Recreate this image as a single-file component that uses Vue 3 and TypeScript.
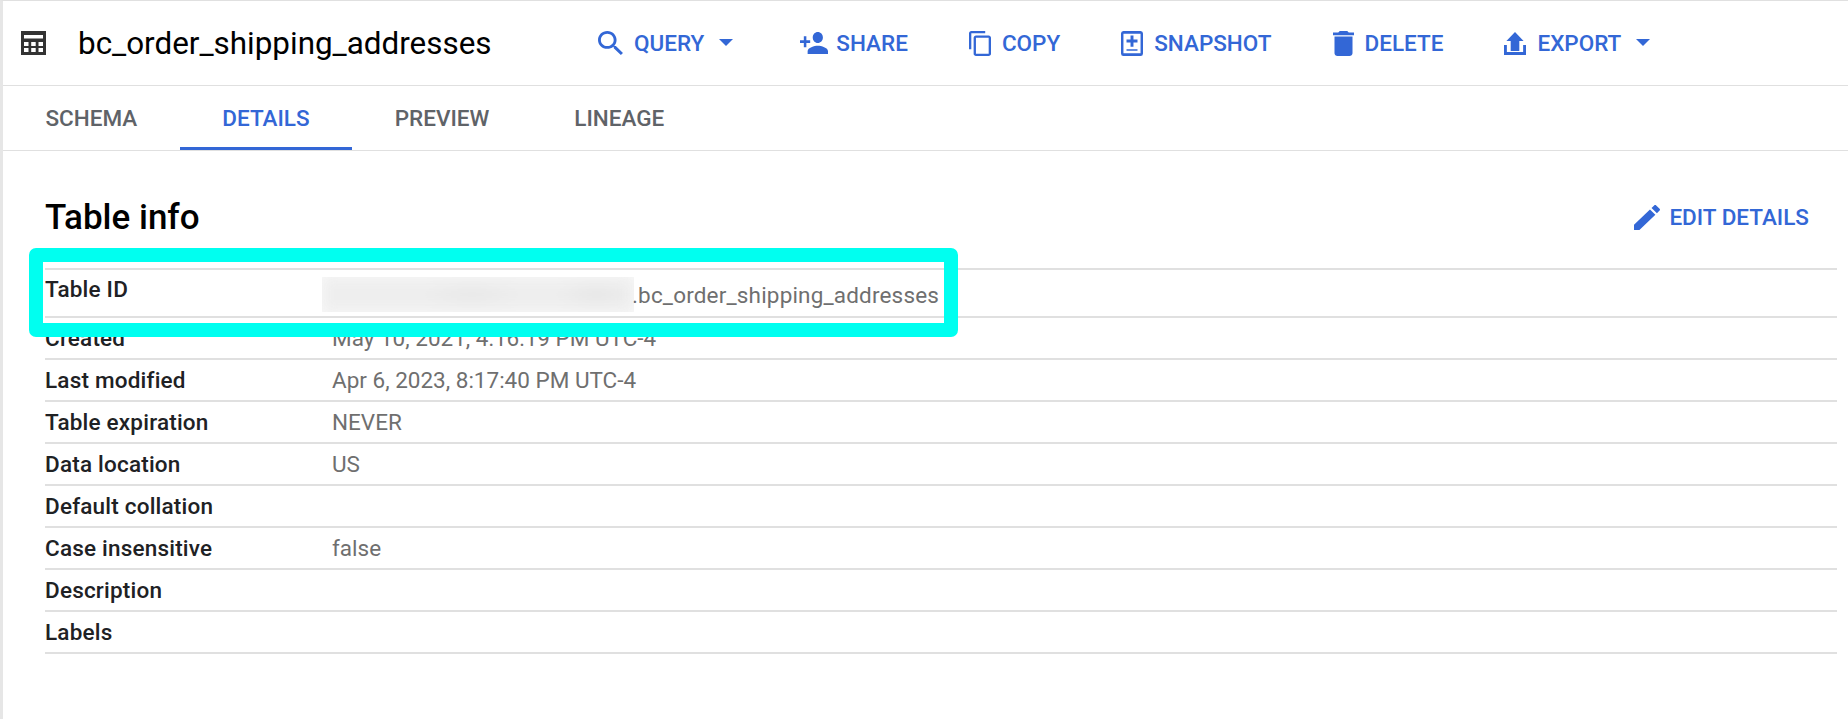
<script setup lang="ts">
interface Act { label: string; d: string; vb: string; w: number; h: number; caret?: boolean; tight?: boolean }
const actions: Act[] = [
  { label: 'QUERY', caret: true, vb: '3 3 17.5 17.5', w: 25, h: 24, d: 'M15.5 14h-.79l-.28-.27C15.41 12.59 16 11.11 16 9.5 16 5.91 13.09 3 9.5 3S3 5.91 3 9.5 5.91 16 9.5 16c1.61 0 3.09-.59 4.23-1.57l.27.28v.79l5 4.99L20.49 19l-4.99-5zm-6 0C7.01 14 5 11.99 5 9.5S7.01 5 9.5 5 14 7.01 14 9.5 11.99 14 9.5 14z' },
  { label: 'SHARE', tight: true, vb: '1 4 22 16', w: 28, h: 22, d: 'M15 12c2.21 0 4-1.79 4-4s-1.79-4-4-4-4 1.79-4 4 1.79 4 4 4zm-9-2V7H4v3H1v2h3v3h2v-3h3v-2H6zm9 4c-2.67 0-8 1.34-8 4v2h16v-2c0-2.66-5.33-4-8-4z' },
  { label: 'COPY', vb: '2 1 19 22', w: 22, h: 25, d: 'M16 1H4c-1.1 0-2 .9-2 2v14h2V3h12V1zm3 4H8c-1.1 0-2 .9-2 2v14c0 1.1.9 2 2 2h11c1.1 0 2-.9 2-2V7c0-1.1-.9-2-2-2zm0 16H8V7h11v14z' },
  { label: 'SNAPSHOT', vb: '3 2 18 20', w: 22, h: 25, d: 'M5 2h14a2 2 0 0 1 2 2v16a2 2 0 0 1-2 2H5a2 2 0 0 1-2-2V4a2 2 0 0 1 2-2zm0 2.200v15.600h14V4.200H5zm5.800 1.300h2.400V8.800h3.300v2.400h-3.300v3.300h-2.400v-3.300H7.500V8.800h3.300V5.500zM7.500 16.500h9v1.300h-9z' },
  { label: 'DELETE', vb: '5 3 14 18', w: 21, h: 25, d: 'M6 19c0 1.100.9 2 2 2h8c1.100 0 2-.9 2-2V7H6v12zM19 4h-3.500l-1-1h-5l-1 1H5v2h14V4z' },
  { label: 'EXPORT', caret: true, vb: '0 0 23 23', w: 22, h: 23, d: 'M11.500 0l9 9H16v10H7V9H2.500zM0 13h3v7h17v-7h3v10H0z' },
]
interface Row { label: string; value: string }
const rows: Row[] = [
  { label: 'Created', value: 'May 10, 2021, 4:16:19 PM UTC-4' },
  { label: 'Last modified', value: 'Apr 6, 2023, 8:17:40 PM UTC-4' },
  { label: 'Table expiration', value: 'NEVER' },
  { label: 'Data location', value: 'US' },
  { label: 'Default collation', value: '' },
  { label: 'Case insensitive', value: 'false' },
  { label: 'Description', value: '' },
  { label: 'Labels', value: '' },
]
const tabs = ['SCHEMA', 'DETAILS', 'PREVIEW', 'LINEAGE']
</script>

<template>
  <div class="page">
    <header class="head">
      <svg class="tbl" viewBox="0 0 25 24"><path fill-rule="evenodd" d="M0 0h25v24H0zM3 4v3.500h19V4zM3 11v4h4.500v-4zM10.200 11v4h4.500v-4zM17.500 11v4H22v-4zM3 17v4h4.500v-4zM10.200 17v4h4.500v-4zM17.500 17v4H22v-4z"/></svg>
      <h1 class="title">bc_order_shipping_addresses</h1>
      <nav class="acts">
        <button v-for="a in actions" :key="a.label" class="act" :class="{ tight: a.tight }">
          <svg class="ic" :viewBox="a.vb" :width="a.w" :height="a.h" preserveAspectRatio="none"><path fill-rule="evenodd" :d="a.d"/></svg>
          <span>{{ a.label }}</span>
          <span v-if="a.caret" class="caret"></span>
        </button>
      </nav>
    </header>
    <div class="tabs">
      <div v-for="(t, i) in tabs" :key="t" class="tab" :class="{ on: i === 1 }">{{ t }}</div>
    </div>
    <main class="body">
      <div class="info-head">
        <h2 class="info">Table info</h2>
        <button class="act edit">
          <svg class="ic" viewBox="3 3 18 18" width="26" height="25" preserveAspectRatio="none"><path d="M3 17.250V21h3.750L17.810 9.940l-3.750-3.750L3 17.250zM20.710 7.040c.39-.39.39-1.020 0-1.410l-2.340-2.340c-.39-.39-1.020-.39-1.410 0l-1.830 1.830 3.750 3.750 1.830-1.830z"/></svg>
          <span>EDIT DETAILS</span>
        </button>
      </div>
      <div class="grid">
        <div class="row first">
          <div class="k">Table ID</div>
          <div class="v idv"><span class="blur"><i></i></span><span class="tail">.bc_order_shipping_addresses</span></div>
        </div>
        <div v-for="r in rows" :key="r.label" class="row">
          <div class="k">{{ r.label }}</div>
          <div class="v">{{ r.value }}</div>
        </div>
      </div>
      <div class="mark"></div>
    </main>
  </div>
</template>

<style>
html, body { margin: 0; background: #fff; }
</style>

<style scoped>
.page {
  position: relative;
  width: 1848px;
  height: 719px;
  box-sizing: border-box;
  border-top: 1px solid #e0e0e0;
  border-left: 3px solid #e6e6e6;
  overflow: hidden;
  font-family: Roboto, "Liberation Sans", sans-serif;
  background: #fff;
}
.head {
  height: 85px;
  box-sizing: border-box;
  border-bottom: 1px solid #e0e0e0;
  display: flex;
  align-items: center;
  padding-left: 18px;
}
.tbl { width: 25px; height: 24px; fill: #333; flex: none; }
.title {
  margin: 0 0 0 32px;
  font-size: 31.4px;
  font-weight: 400;
  color: #000;
  width: 520px;
  flex: none;
  white-space: nowrap;
}
.acts { display: flex; align-items: center; gap: 61px; }
.act {
  display: flex;
  align-items: center;
  gap: 11px;
  border: 0;
  background: none;
  padding: 0;
  color: #3367d6;
  font: 500 22.5px Roboto, sans-serif;
}
.act.tight { gap: 8px; }
.act .ic { fill: #3367d6; flex: none; }
.caret {
  margin-left: 4px;
  margin-right: 6px;
  width: 0;
  height: 0;
  border-left: 7px solid transparent;
  border-right: 7px solid transparent;
  border-top: 7px solid #3367d6;
  margin-top: -2px;
}
.tabs {
  height: 65px;
  box-sizing: border-box;
  border-bottom: 1px solid #e0e0e0;
  display: flex;
}
.tab {
  padding: 0 42.5px;
  display: flex;
  align-items: center;
  justify-content: center;
  font-size: 22.5px;
  font-weight: 500;
  color: #5f6368;
  height: 64px;
  box-sizing: border-box;
}
.tab.on { color: #3367d6; border-bottom: 3px solid #3367d6; padding-top: 3px; }
.body { padding: 0 11px 0 42px; }
.info-head {
  height: 117px;
  box-sizing: border-box;
  padding: 15px 28px 0 0;
  display: flex;
  align-items: center;
  justify-content: space-between;
}
.info { margin: 0; font-size: 35px; font-weight: 500; color: #000; }
.edit { gap: 9px; }
.row {
  height: 42px;
  box-sizing: border-box;
  border-bottom: 2px solid #e0e0e0;
  display: flex;
  align-items: center;
  font-size: 22.5px;
}
.row.first {
  height: 50px;
  border-top: 2px solid #e0e0e0;
  align-items: flex-start;
}
.k { width: 287px; font-weight: 500; color: #202124; flex: none; letter-spacing: .2px; }
.first .k { padding-top: 6px; }
.v { color: #6f6f6f; }
.idv { display: flex; align-items: center; padding-top: 7px; }
.tail { margin-left: -2px; letter-spacing: .17px; }
.blur { display: block; width: 312px; height: 35px; margin-left: -10px; overflow: hidden; background: #f8f8f8; }
.blur i {
  display: block;
  width: 100%;
  height: 100%;
  background:
    radial-gradient(ellipse 50px 14px at 48% 50%, #e8e8e8, transparent),
    radial-gradient(ellipse 40px 14px at 88% 50%, #e6e6e6, transparent),
    #eeeeee;
  filter: blur(7px);
}
.mark {
  position: absolute;
  left: 26px;
  top: 247px;
  width: 929px;
  height: 89px;
  box-sizing: border-box;
  border: 14px solid #00fff0;
  border-radius: 7px;
}
</style>
